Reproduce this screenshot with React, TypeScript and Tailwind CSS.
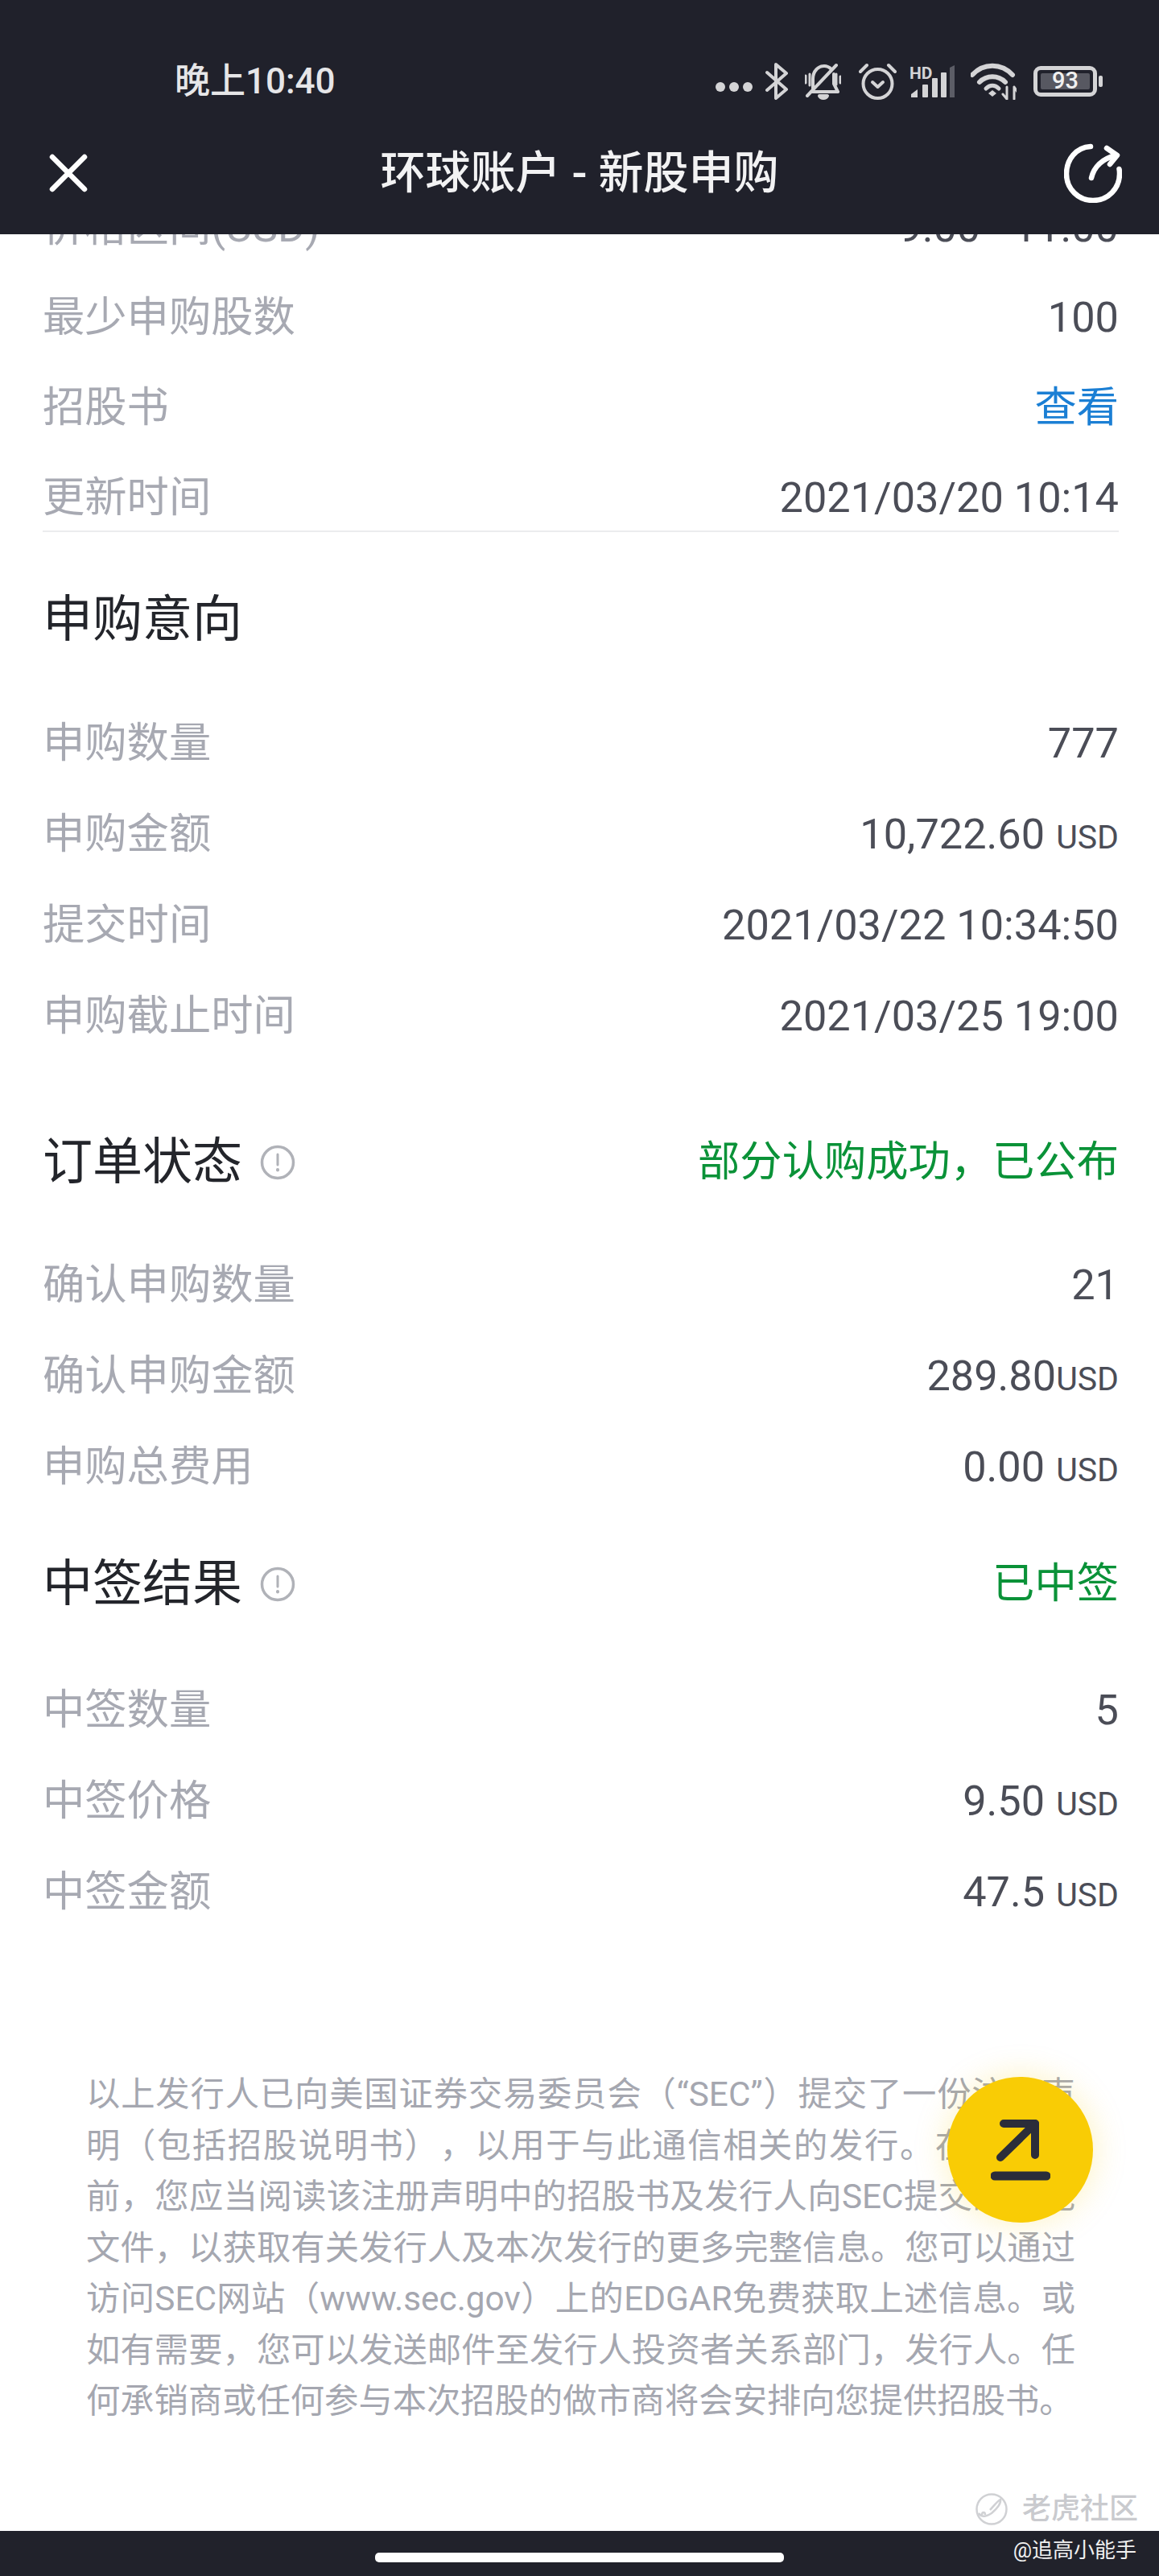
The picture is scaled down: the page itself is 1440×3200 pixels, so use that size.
import type { ReactNode } from 'react';

const font = "font-['Roboto','Noto_Sans_CJK_SC',sans-serif]";

function StatusIcons() {
  return (
    <div className="flex items-center">
      {/* three dots */}
      <div className="mt-[14px] flex gap-[5px]">
        <span className="h-[12px] w-[12px] rounded-full bg-[#d4d4d6]" />
        <span className="h-[12px] w-[12px] rounded-full bg-[#d4d4d6]" />
        <span className="h-[12px] w-[12px] rounded-full bg-[#d4d4d6]" />
      </div>
      {/* bluetooth */}
      <svg className="ml-[16px]" width="29" height="46" viewBox="0 0 29 46" fill="none" stroke="#d4d4d6" strokeWidth="4" strokeLinejoin="round" strokeLinecap="round">
        <path d="M2 12 L26 33 L13 44 V2 L26 13 L2 34" />
      </svg>
      {/* muted bell */}
      <svg className="ml-[20px]" width="45" height="46" viewBox="0 0 45 46" fill="none" stroke="#d4d4d6" strokeWidth="4" strokeLinecap="round" strokeLinejoin="round">
        <path d="M10 32 V20 C10 10 17 4 24 4 C28 4 31 6 33 8" />
        <path d="M36 14 V26 L41 36 H8" />
        <path d="M39 3 L3 41" />
        <path d="M18 41 C20 45 26 45 28 41 Z" fill="#d4d4d6" />
        <path d="M1 16 V25 M6 14 V28 M39 14 V27 M44 17 V25" strokeWidth="3" />
      </svg>
      {/* alarm */}
      <svg className="ml-[22px]" width="47" height="46" viewBox="0 0 47 46" fill="none" stroke="#d4d4d6" strokeWidth="4" strokeLinecap="round" strokeLinejoin="round">
        <circle cx="23.5" cy="26" r="18" />
        <path d="M2 11 L10 3 M45 11 L37 3" />
        <path d="M17 24 L23.5 30 L30 24" />
      </svg>
      {/* HD signal */}
      <svg className="ml-[16px]" width="56" height="42" viewBox="0 0 56 42" fill="#d4d4d6">
        <text x="0" y="18" fontSize="21" fontWeight="700" fontFamily="Roboto, sans-serif">HD</text>
        <path d="M2 41 V37 L10 31 V41 Z" />
        <rect x="16" y="25" width="7" height="16" rx="1" />
        <rect x="28" y="17" width="7" height="24" rx="1" />
        <rect x="39" y="10" width="7" height="31" rx="1" />
        <path d="M50 4 L56 1 V41 H50 Z" fill="#5c5d66" />
      </svg>
      {/* wifi */}
      <svg className="ml-[20px]" width="57" height="46" viewBox="0 0 57 46" fill="none" stroke="#d4d4d6" strokeWidth="6" strokeLinecap="round">
        <path d="M2 15 C16 0 38 0 52 15" />
        <path d="M11 24 C20 15 34 15 43 24" />
        <path d="M19 32 C24 27 30 27 35 32" strokeWidth="5" />
        <path d="M22 38 L27 34 L32 38 L27 42 Z" fill="#d4d4d6" stroke="none" />
        <path d="M45 30 V45 M40 39 L45 45 M54 45 V30 M54 30 L58 36" strokeWidth="3" />
      </svg>
      {/* battery */}
      <div className="ml-[21px] flex items-center">
        <div className="flex h-[38px] w-[79px] items-center rounded-[9px] border-[5px] border-[#d4d4d6] px-[4px]">
          <div className={`flex h-[20px] w-full items-center justify-center rounded-[2px] bg-[#575861] text-[29px] font-medium text-[#f0f0f0] ${font}`}>
            93
          </div>
        </div>
        <span className="ml-[2px] h-[14px] w-[5px] rounded-[2px] bg-[#d4d4d6]" />
      </div>
    </div>
  );
}

function Row({ label, value, unit, unitGap = true, className = 'h-[112px]' }: { label: string; value: ReactNode; unit?: string; unitGap?: boolean; className?: string }) {
  return (
    <div className={`flex items-center justify-between ${className}`}>
      <span className="text-[52.3px] text-[#a7a9b2]">{label}</span>
      <span className="flex items-baseline text-[52.3px] text-[#4b4d57]">
        {value}
        {unit && <span className={`text-[41px] ${unitGap ? 'ml-[14px]' : ''}`}>{unit}</span>}
      </span>
    </div>
  );
}

function InfoIcon() {
  return (
    <svg className="ml-[22px] mt-[2px]" width="44" height="44" viewBox="0 0 44 44" fill="none" stroke="#b0b2b8" strokeWidth="3.5" strokeLinecap="round">
      <circle cx="22" cy="22" r="19.5" />
      <path d="M22 12 V25" strokeWidth="3" />
      <path d="M22 31 V31.5" strokeWidth="4" />
    </svg>
  );
}

function Heading({ title, status, info, className }: { title: string; status?: string; info?: boolean; className: string }) {
  return (
    <div className={`flex h-[112px] items-center justify-between ${className}`}>
      <div className="flex items-center">
        <span className="text-[62px] text-[#23252b]">{title}</span>
        {info && <InfoIcon />}
      </div>
      {status && <span className="text-[52.3px] text-[#0a9238]">{status}</span>}
    </div>
  );
}

export default function App() {
  return (
    <div className={`relative flex h-[3200px] w-[1440px] flex-col overflow-hidden bg-white ${font}`}>
      {/* Header */}
      <header className="z-10 h-[291px] shrink-0 bg-[#20212b]">
        <div className="flex h-[178px] items-start justify-between pl-[217px] pr-[70px] pt-[78px]">
          <span className="text-[44px] font-medium leading-[46px] text-[#e6e6e8]">晚上10:40</span>
          <StatusIcons />
        </div>
        <div className="flex items-center justify-between pl-[60px] pr-[46px]">
          <svg width="50" height="50" viewBox="0 0 50 50" fill="none" stroke="#ffffff" strokeWidth="6.5" strokeLinecap="round">
            <path d="M5 5 L45 45 M45 5 L5 45" />
          </svg>
          <span className="ml-[8px] text-[56px] font-medium leading-[60px] text-[#f2f2f3]">环球账户 - 新股申购</span>
          <svg width="72" height="74" viewBox="0 0 72 74" fill="none" stroke="#ffffff" strokeWidth="6.5" strokeLinecap="round" strokeLinejoin="round">
            <path d="M33 4 C15 5 3 20 3 38 C3 57 18 71 36 71 C55 71 69 56 69 38 C69 36 69 34 68.5 32" />
            <path d="M34 43 C37 30 47 19 65 15" />
            <path d="M53 6 L66 15 L57 26" />
          </svg>
        </div>
      </header>

      <main className="flex-1 overflow-hidden pl-[53px] pr-[50px]">
        <div className="relative z-0 -mt-[65px] h-[435px] border-b-2 border-[#ebecee]">
          <Row label="价格区间(USD)" value="9.00 - 11.00" />
          <Row label="最少申购股数" value="100" />
          <Row label="招股书" value={<span className="text-[#1b7fd4]">查看</span>} />
          <Row label="更新时间" value="2021/03/20 10:14" />
        </div>

        <Heading title="申购意向" className="mt-[52px] mb-[42px]" />
        <Row className="h-[113px]" label="申购数量" value="777" />
        <Row className="h-[113px]" label="申购金额" value="10,722.60" unit="USD" />
        <Row className="h-[113px]" label="提交时间" value="2021/03/22 10:34:50" />
        <Row className="h-[113px]" label="申购截止时间" value="2021/03/25 19:00" />

        <Heading title="订单状态" status="部分认购成功，已公布" info className="mt-[68px] mb-[41px]" />
        <Row className="h-[113px]" label="确认申购数量" value="21" />
        <Row className="h-[113px]" label="确认申购金额" value="289.80" unit="USD" unitGap={false} />
        <Row className="h-[113px]" label="申购总费用" value="0.00" unit="USD" />

        <Heading title="中签结果" status="已中签" info className="mt-[32px] mb-[45px]" />
        <Row className="h-[113px]" label="中签数量" value="5" />
        <Row className="h-[113px]" label="中签价格" value="9.50" unit="USD" />
        <Row className="h-[113px]" label="中签金额" value="47.5" unit="USD" />

        <p className="ml-[54px] mr-[54px] mt-[163px] text-justify text-[42.3px] leading-[63.5px] text-[#a5a7b0] [text-spacing-trim:space-all]">
          以上发行人已向美国证券交易委员会（“SEC”）提交了一份注册声明（包括招股说明书），以用于与此通信相关的发行。在投资之前，您应当阅读该注册声明中的招股书及发行人向SEC提交的其他文件，以获取有关发行人及本次发行的更多完整信息。您可以通过访问SEC网站（www.sec.gov）上的EDGAR免费获取上述信息。或如有需要，您可以发送邮件至发行人投资者关系部门，发行人。任何承销商或任何参与本次招股的做市商将会安排向您提供招股书。
        </p>
      </main>

      {/* Floating share button */}
      <button className="absolute left-[1177px] top-[2580px] flex h-[181px] w-[181px] items-center justify-center rounded-full bg-[#f9cc05] shadow-[0_0_40px_rgba(249,204,5,0.25)]">
        <svg width="74" height="76" viewBox="0 0 74 76" fill="none" stroke="#2b2d3a" strokeWidth="10" strokeLinecap="round" strokeLinejoin="round">
          <path d="M16 5 H55 V44" />
          <path d="M55 5 L12 47" />
          <path d="M5 70 H69" strokeWidth="11" />
        </svg>
      </button>

      {/* Watermark */}
      <div className="absolute left-[1212px] top-[3096px] flex items-center">
        <svg width="40" height="42" viewBox="0 0 40 42" fill="none" stroke="#d0d1d4" strokeWidth="2.5">
          <circle cx="20" cy="21" r="18.5" />
          <path d="M4 26 C8 32 14 30 20 26 C27 20 32 14 31 9 C26 12 22 18 18 22 M8 28 C8 24 12 24 12 28" />
        </svg>
        <span className="ml-[18px] text-[36px] font-medium leading-[42px] text-[#c9cace]">老虎社区</span>
      </div>

      {/* Bottom bar */}
      <footer className="relative h-[56px] shrink-0 bg-[#21222b]">
        <div className="absolute left-[466px] top-[27px] h-[12px] w-[508px] rounded-[5px] bg-white" />
        <span className="absolute right-[28px] top-[8px] text-[26px] leading-[32px] text-[#f0f0f0]">@追高小能手</span>
      </footer>
    </div>
  );
}
